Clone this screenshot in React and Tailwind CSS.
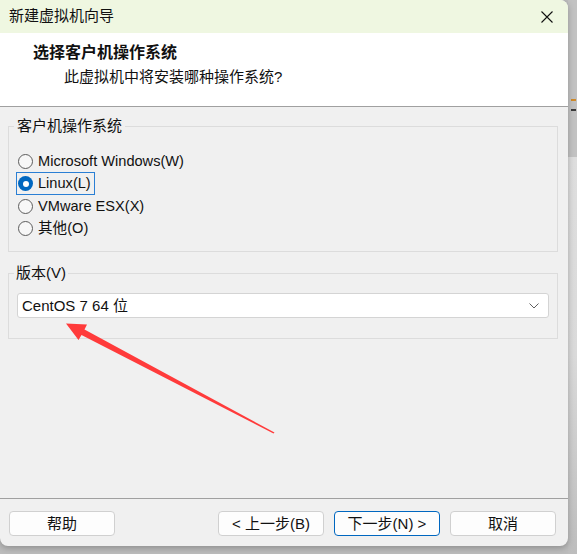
// App.jsx

import React, { useState } from 'react';

const FONT = "font-['Liberation_Sans','Noto_Sans_CJK_SC',sans-serif]";

const osOptions = [
    { key: 'win', label: 'Microsoft Windows(W)' },
    { key: 'linux', label: 'Linux(L)' },
    { key: 'esx', label: 'VMware ESX(X)' },
    { key: 'other', label: '其他(O)' },
];

const Radio = ({ checked, label, onClick }) => (
    <div className="flex items-center h-[22.5px]">
        <span
            onClick={onClick}
            className={
                checked
                    ? 'inline-flex items-center gap-[5px] h-[23px] pl-[1px] pr-[3px] border border-[#2a7fd4] cursor-default'
                    : 'inline-flex items-center gap-[5px] h-[23px] pl-[1px] pr-[3px] border border-transparent cursor-default'
            }
        >
            {checked ? (
                <span className="flex items-center justify-center w-[15px] h-[15px] rounded-full bg-[#0067c0]">
                    <span className="w-[6px] h-[6px] rounded-full bg-white" />
                </span>
            ) : (
                <span className="w-[15px] h-[15px] rounded-full border border-[#5c5c5c] bg-[#f7f7f7]" />
            )}
            <span className="text-[14.6px] leading-none text-[#111]">{label}</span>
        </span>
    </div>
);

const Button = ({ children, primary }) => (
    <button
        className={
            primary
                ? 'w-[106px] h-[25px] rounded-[4px] border border-[#0067c0] bg-[#fdfdfd] text-[15px] leading-none text-[#111]'
                : 'w-[106px] h-[25px] rounded-[4px] border border-[#d0d0d0] bg-[#fdfdfd] text-[15px] leading-none text-[#111]'
        }
    >
        {children}
    </button>
);

const Arrow = () => (
    // the red annotation arrow drawn over the dialog
    <svg className="absolute left-0 top-0 pointer-events-none" width="568" height="546">
        <polygon
            points="66,323.5 87,324.5 84.5,329.5 274.5,432.5 273.5,433.5 81.5,335 78.5,340"
            fill="#ff3b3b"
        />
    </svg>
);

export default function App() {
    const [os, setOs] = useState('linux');

    return (
        <div className={`w-[577px] h-[554px] flex bg-[#bcbcbc] overflow-hidden ${FONT}`}>
            <div className="w-[568px] flex flex-col">
                <div className="relative w-[568px] h-[546px] flex flex-col bg-[#f0f0f0] rounded-tr-[8px] rounded-b-[8px] overflow-hidden shadow-[0_2px_6px_rgba(0,0,0,0.25)]">
                    {/* title bar */}
                    <div className="h-[33px] shrink-0 flex items-center justify-between pl-[9px] pr-[15px] bg-[#eff7e1]">
                        <span className="text-[15px] text-[#111]">新建虚拟机向导</span>
                        <svg width="12" height="12" viewBox="0 0 12 12">
                            <path d="M0.5 0.5 L11.5 11.5 M11.5 0.5 L0.5 11.5" stroke="#111" strokeWidth="1.1" />
                        </svg>
                    </div>

                    {/* header */}
                    <div className="h-[74px] shrink-0 bg-white border-b border-[#a0a0a0] pl-[33px] pt-[8px]">
                        <div className="text-[16px] font-bold leading-[24px] text-[#111]">选择客户机操作系统</div>
                        <div className="ml-[31px] text-[15px] leading-[24px] text-[#111]">此虚拟机中将安装哪种操作系统?</div>
                    </div>

                    {/* guest os group */}
                    <fieldset className="ml-[8px] mr-[10px] mt-[9px] border border-[#dcdcdc] pl-[7px] pr-[8px] pb-[11px]">
                        <legend className="ml-[-2px] px-[3px] text-[15px] leading-[20px] text-[#111]">客户机操作系统</legend>
                        <div className="pt-[14px] flex flex-col">
                            {osOptions.map((o) => (
                                <Radio key={o.key} label={o.label} checked={os === o.key} onClick={() => setOs(o.key)} />
                            ))}
                        </div>
                    </fieldset>

                    {/* version group */}
                    <fieldset className="ml-[8px] mr-[10px] mt-[11px] border border-[#dcdcdc] px-[8px] pb-[20px]">
                        <legend className="ml-[-3px] px-[2px] text-[15px] leading-[20px] text-[#111]">版本(V)</legend>
                        <div className="mt-[10px] h-[25px] flex items-center justify-between bg-white border border-[#d4d4d4] rounded-[3px] pl-[4px] pr-[9px]">
                            <span className="text-[15px] leading-none text-[#111]">CentOS 7 64 位</span>
                            <svg width="10" height="6" viewBox="0 0 10 6">
                                <path d="M0.5 0.5 L5 5 L9.5 0.5" fill="none" stroke="#606060" strokeWidth="1" />
                            </svg>
                        </div>
                    </fieldset>

                    <div className="flex-1" />

                    {/* footer */}
                    <div className="h-[48px] shrink-0 border-t border-[#a0a0a0] flex items-start pt-[12px] pl-[9px] pr-[12px]">
                        <Button>帮助</Button>
                        <div className="flex-1" />
                        <div className="flex gap-[10px]">
                            <Button>&lt; 上一步(B)</Button>
                            <Button primary>下一步(N) &gt;</Button>
                            <Button>取消</Button>
                        </div>
                    </div>

                    <Arrow />
                </div>
            </div>

            {/* what peeks out behind the dialog */}
            <div className="w-[9px] flex flex-col">
                <div className="h-[157px] bg-[#c2c2c2] flex flex-col pt-[99px] pl-[3px]">
                    <span className="w-[5px] h-[2px] bg-[#d08a2a]" />
                    <span className="mt-[8px] w-[5px] h-[2px] bg-[#3a3a3a]" />
                </div>
                <div className="flex-1 bg-gradient-to-b from-[#dedede] via-[#dadada] to-[#bdbdbd]" />
            </div>
        </div>
    );
}
